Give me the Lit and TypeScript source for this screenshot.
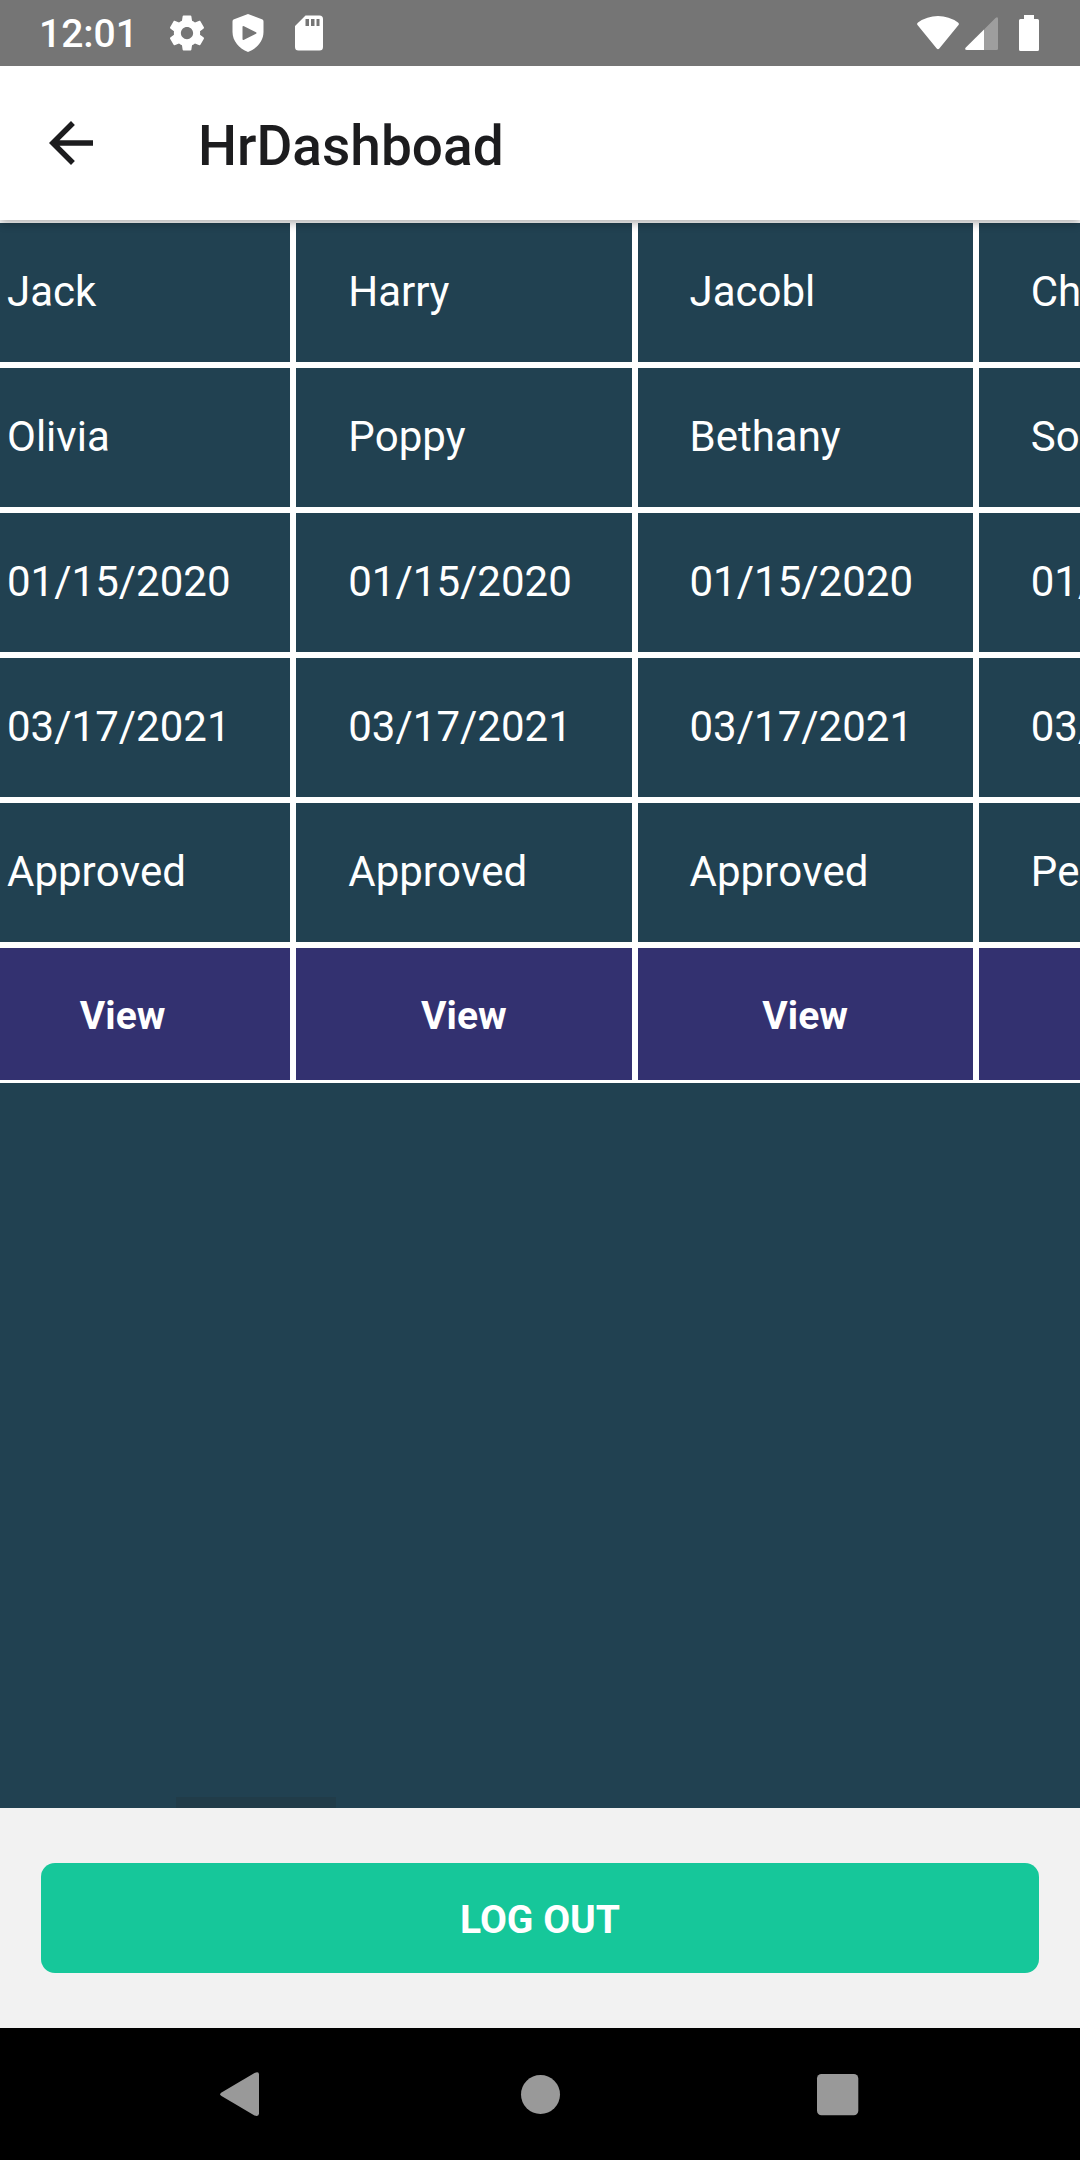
import { LitElement, html, css, svg } from "lit";
import { customElement, property, query } from "lit/decorators.js";

interface Leave {
  first: string;
  last: string;
  from: string;
  to: string;
  status: string;
}

const LEAVES: Leave[] = [
  { first: "Jack", last: "Olivia", from: "01/15/2020", to: "03/17/2021", status: "Approved" },
  { first: "Harry", last: "Poppy", from: "01/15/2020", to: "03/17/2021", status: "Approved" },
  { first: "Jacobl", last: "Bethany", from: "01/15/2020", to: "03/17/2021", status: "Approved" },
  { first: "Charlie", last: "Sophie", from: "01/15/2020", to: "03/17/2021", status: "Pending" },
];

const FIELDS: (keyof Leave)[] = ["first", "last", "from", "to", "status"];

@customElement("status-bar")
export class StatusBar extends LitElement {
  static styles = css`
    :host {
      display: flex;
      align-items: center;
      justify-content: space-between;
      height: 66px;
      padding: 0 41px 0 39px;
      background: #757575;
      color: #fff;
    }
    .side {
      display: flex;
      align-items: center;
    }
    .time {
      font-size: 39px;
      line-height: 48px;
      font-weight: 500;
      padding-top: 2px;
      margin-right: 28px;
    }
    .notices {
      display: flex;
      gap: 19px;
    }
    svg {
      display: block;
      fill: currentColor;
    }
    .signals {
      gap: 6px;
    }
    .battery {
      margin-left: 14px;
    }
  `;

  render() {
    return html`
      <div class="side">
        <span class="time">12:01</span>
        <div class="notices">
          <svg width="42" height="42" viewBox="0 0 24 24" aria-hidden="true">
            <path d="M19.43 12.98c.04-.32.07-.64.07-.98s-.03-.66-.07-.98l2.11-1.65c.19-.15.24-.42.12-.64l-2-3.46c-.12-.22-.39-.3-.61-.22l-2.49 1c-.52-.4-1.08-.73-1.69-.98l-.38-2.65C14.46 2.18 14.25 2 14 2h-4c-.25 0-.46.18-.49.42l-.38 2.65c-.61.25-1.17.59-1.69.98l-2.49-1c-.23-.09-.49 0-.61.22l-2 3.46c-.13.22-.07.49.12.64l2.11 1.65c-.04.32-.07.65-.07.98s.03.66.07.98l-2.11 1.65c-.19.15-.24.42-.12.64l2 3.46c.12.22.39.3.61.22l2.49-1c.52.4 1.08.73 1.69.98l.38 2.65c.03.24.24.42.49.42h4c.25 0 .46-.18.49-.42l.38-2.65c.61-.25 1.17-.59 1.69-.98l2.49 1c.23.09.49 0 .61-.22l2-3.46c.12-.22.07-.49-.12-.64l-2.11-1.65zM12 15.5c-1.93 0-3.500-1.570-3.500-3.500s1.570-3.500 3.500-3.500 3.500 1.570 3.500 3.500-1.570 3.500-3.500 3.500z" />
          </svg>
          <svg width="42" height="42" viewBox="0 0 42 42" aria-hidden="true">
            <path fill-rule="evenodd" d="M21 2 35.500 7.500Q36.500 8 36.500 9.500V20C36.500 29 30 36.500 21 40 12 36.500 5.500 29 5.500 20V9.500Q5.500 8 6.500 7.500ZM15.500 15V27Q15.500 28.500 17 27.800L29 21.800Q30 21 29 20.300L17 14.200Q15.500 13.500 15.500 15Z" />
          </svg>
          <svg width="42" height="42" viewBox="0 0 42 42" aria-hidden="true">
            <path fill-rule="evenodd" d="M17.500 3.500H31.500Q35 3.500 35 7V35Q35 38.500 31.500 38.500H10.500Q7 38.500 7 35V14ZM17.500 7V14H21V7ZM23 7V14H26.500V7ZM28.500 7V14H31.500V7Z" />
          </svg>
        </div>
      </div>
      <div class="side signals">
        <svg width="42" height="36" viewBox="0 0 42 36" aria-hidden="true">
          <path d="M1 7.500Q10 1 21 1 32 1 41 7.500 42.500 8.500 41.500 10L22.300 33.500Q21 35 19.700 33.500L.5 10Q-.5 8.500 1 7.500Z" />
        </svg>
        <svg width="34" height="36" viewBox="0 0 34 36" aria-hidden="true">
          <path opacity=".3" d="M19 14.500 30.500 3Q33 1 33 4V34Q33 35 31.500 35H19Z" />
          <path d="M19 14.500V35H2Q-1 35 .8 32.500Z" />
        </svg>
        <svg class="battery" width="20" height="36" viewBox="0 0 20 36" aria-hidden="true">
          <path d="M5 0H15V4H18.500Q20 4 20 5.500V34.500Q20 36 18.500 36H1.500Q0 36 0 34.500V5.500Q0 4 1.500 4H5Z" />
        </svg>
      </div>
    `;
  }
}

@customElement("app-header")
export class AppHeader extends LitElement {
  @property() heading = "";

  static styles = css`
    :host {
      display: flex;
      align-items: center;
      gap: 94px;
      height: 154px;
      padding: 0 38px;
      background: #fff;
      color: #1c1c1e;
      position: relative;
      z-index: 1;
      box-shadow: 0 3px 9px rgba(0, 0, 0, 0.32);
      clip-path: inset(0 0 -20px 0);
    }
    .back {
      border: 0;
      padding: 0;
      background: none;
      color: inherit;
    }
    svg {
      display: block;
      fill: currentColor;
    }
    h1 {
      margin: 0;
      padding-top: 6px;
      font-size: 55px;
      line-height: 64px;
      font-weight: 500;
    }
  `;

  render() {
    return html`
      <button class="back" aria-label="Back">
        <svg width="66" height="66" viewBox="0 0 24 24">
          <path d="M20 11H7.830l5.590-5.590L12 4l-8 8 8 8 1.410-1.410L7.830 13H20v-2z" />
        </svg>
      </button>
      <h1>${this.heading}</h1>
    `;
  }
}

@customElement("leave-table")
export class LeaveTable extends LitElement {
  @property({ attribute: false }) leaves: Leave[] = [];
  @query(".scroller") private scroller!: HTMLElement;

  static styles = css`
    :host {
      display: flex;
      flex-direction: column;
      position: relative;
      min-width: 0;
      background: #214151;
      color: #fff;
    }
    .scroller {
      flex: 1;
      overflow-x: auto;
      overflow-y: hidden;
      scrollbar-width: none;
    }
    table {
      width: calc(100% + 285px);
      table-layout: fixed;
      border-collapse: separate;
      border-spacing: 0;
    }
    td {
      box-sizing: border-box;
      height: 145px;
      padding: 0 52px 2px;
      border: 3px solid #fff;
      font-size: 42px;
      line-height: 48px;
      font-kerning: none;
      white-space: nowrap;
    }
    .action {
      height: 138px;
      padding: 0;
      background: #333170;
    }
    .view {
      display: block;
      width: 100%;
      height: 132px;
      padding: 4px 0 0;
      border: 0;
      background: none;
      color: inherit;
      font: bold 39px/48px Roboto, sans-serif;
    }
    .thumb {
      position: absolute;
      left: 176px;
      bottom: 0;
      width: 160px;
      height: 11px;
      background: #213c49;
    }
  `;

  firstUpdated() {
    this.scroller.scrollLeft = 48;
  }

  render() {
    return html`
      <div class="scroller">
        <table>
          <tbody>
            ${FIELDS.map(
              (field) => html`<tr>
                ${this.leaves.map((leave) => html`<td>${leave[field]}</td>`)}
              </tr>`
            )}
            <tr>
              ${this.leaves.map(
                () => html`<td class="action"><button class="view">View</button></td>`
              )}
            </tr>
          </tbody>
        </table>
      </div>
      <div class="thumb"></div>
    `;
  }
}

@customElement("nav-bar")
export class NavBar extends LitElement {
  static styles = css`
    :host {
      display: flex;
      justify-content: center;
      height: 132px;
      padding: 0 90px;
      background: #000;
      color: #999;
    }
    button {
      flex: 1;
      display: flex;
      align-items: center;
      justify-content: center;
      padding: 0;
      border: 0;
      background: none;
      color: inherit;
    }
    svg {
      fill: currentColor;
    }
  `;

  private key(label: string, shape: unknown) {
    return html`<button aria-label=${label}>
      <svg width="48" height="48" viewBox="0 0 48 48">${shape}</svg>
    </button>`;
  }

  render() {
    return html`
      ${this.key(
        "Back",
        svg`<path d="M5.500 22.500 38.500 3Q43 1 43 4.500V43.500Q43 47 38.500 45.500L5.500 26Q3 24.200 5.500 22.500Z" />`
      )}
      ${this.key("Home", svg`<circle cx="24.500" cy="24.500" r="19.500" />`)}
      ${this.key("Recent apps", svg`<rect x="1" y="4" width="41.300" height="41.300" rx="4.500" />`)}
    `;
  }
}

@customElement("app-root")
export class AppRoot extends LitElement {
  static styles = css`
    :host {
      display: flex;
      flex-direction: column;
      min-height: 100vh;
      overflow: hidden;
      font-family: Roboto, sans-serif;
      background: #f2f2f2;
    }
    leave-table {
      flex: 1;
    }
    .footer {
      display: flex;
      padding: 55px 41px;
    }
    .logout {
      flex: 1;
      height: 110px;
      padding: 4px 0 0;
      border: 0;
      border-radius: 14px;
      background: #16c79a;
      color: #fff;
      font: bold 39px/48px Roboto, sans-serif;
    }
  `;

  render() {
    return html`
      <status-bar></status-bar>
      <app-header heading="HrDashboad"></app-header>
      <leave-table .leaves=${LEAVES}></leave-table>
      <div class="footer">
        <button class="logout">LOG OUT</button>
      </div>
      <nav-bar></nav-bar>
    `;
  }
}
